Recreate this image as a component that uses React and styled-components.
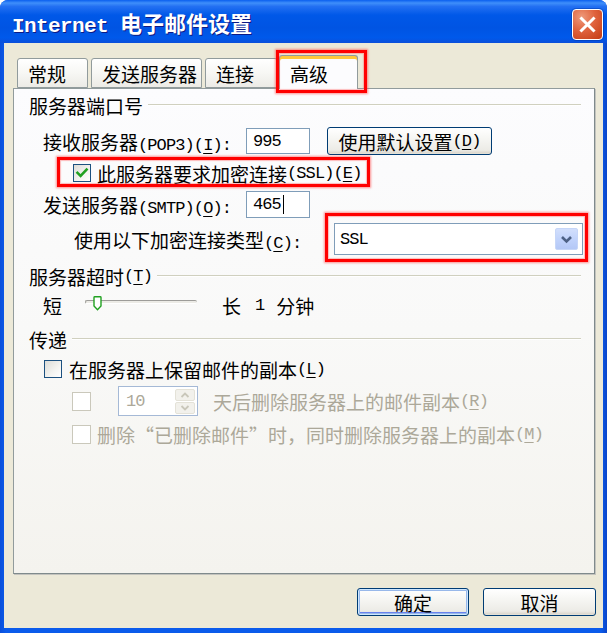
import React from 'react';
import styled, { createGlobalStyle } from 'styled-components';

const Global = createGlobalStyle`
  html, body { margin: 0; padding: 0; background: #ffffff; }
  body { font-family: "Noto Sans CJK SC", sans-serif; color: #000; }
  * { box-sizing: border-box; }
`;

const Window = styled.div`
  width: 607px;
  height: 633px;
  display: flex;
  flex-direction: column;
  background: linear-gradient(to right, #0A4FDB 0%, #0B5BEB 1%, #0B5BEB 99%, #0A45C8 100%);
  border-radius: 8px 8px 0 0;
  overflow: hidden;
`;

const TitleBar = styled.div`
  height: 43px;
  flex: none;
  display: flex;
  align-items: center;
  justify-content: space-between;
  padding: 6px 4px 0 12px;
  background: linear-gradient(to bottom, #0A5FEF 0%, #3F8FFA 7%, #2370F2 15%, #0058E8 35%, #0054E3 65%, #0059EB 88%, #0B4FDA 100%);
`;

const TitleText = styled.div`
  color: #fff;
  font-weight: bold;
  font-size: 22px;
  line-height: 28px;
  text-shadow: 1px 1px 0 #0C1A85;
  white-space: nowrap;
`;

const TitleLatin = styled.span`
  font-family: "Liberation Mono", monospace;
  font-size: 21px;
  letter-spacing: -0.6px;
  font-weight: bold;
  margin-right: 12px;
`;

const CloseButton = styled.div`
  width: 31px;
  height: 31px;
  border: 1px solid #ffffff;
  border-radius: 4px;
  background: radial-gradient(circle at 30% 25%, #EE9A7C 0%, #E0633E 45%, #C33A12 100%);
  display: flex;
  align-items: center;
  justify-content: center;
  box-shadow: 0 0 0 1px rgba(0, 40, 140, 0.35);
`;

const Body = styled.div`
  flex: 1;
  margin: 0 4px 5px 4px;
  background: #ECE9D8;
  display: flex;
  flex-direction: column;
  padding: 12px 8px 12px 9px;
`;

const TabStrip = styled.div`
  height: 33px;
  display: flex;
  align-items: flex-end;
  padding-left: 4px;
  position: relative;
  z-index: 2;
`;

const Tab = styled.div`
  position: relative;
  width: ${p => p.$w}px;
  height: ${p => (p.$active ? 34 : 30)}px;
  margin-left: ${p => p.$ml || 0}px;
  margin-bottom: ${p => (p.$active ? -1 : 0)}px;
  border: 1px solid #919B9C;
  border-bottom: ${p => (p.$active ? 'none' : '1px solid #919B9C')};
  border-radius: 3px 3px 0 0;
  background: ${p => (p.$active
    ? '#FCFCFE'
    : 'linear-gradient(to bottom, #FFFFFF 0%, #F7F7F4 50%, #ECEBE6 100%)')};
  box-shadow: ${p => (p.$active ? 'inset 0 3px 0 #FFC83C, inset 0 1px 0 #E68B2C' : 'none')};
  font-size: 19px;
  line-height: 1;
  display: flex;
  align-items: center;
  padding-left: 10px;
  padding-top: ${p => (p.$active ? 1 : 0)}px;
  white-space: nowrap;
`;

const Mark = styled.div`
  position: absolute;
  left: ${p => p.$l}px;
  top: ${p => p.$t}px;
  width: ${p => p.$w}px;
  height: ${p => p.$h}px;
  border: 3px solid #FF0000;
  box-shadow: 0 0 2px 1px rgba(255, 60, 60, 0.55), inset 0 0 1px 1px rgba(255, 90, 90, 0.4);
  pointer-events: none;
  z-index: 5;
`;

const Panel = styled.div`
  height: 486px;
  flex: none;
  border: 1px solid #919B9C;
  border-right-color: #7F8A8C;
  border-bottom-color: #7F8A8C;
  box-shadow: 1px 1px 0 #C3C3BE;
  background: linear-gradient(to bottom, #FCFCFE 0%, #F9F9F8 50%, #F4F3EE 100%);
  display: flex;
  flex-direction: column;
  padding: 4px 13px 0 0;
  font-size: 19px;
`;

const GroupHead = styled.div`
  margin-top: ${p => p.$mt || 0}px;
  height: 24px;
  display: flex;
  align-items: center;
  padding-left: 15px;
  white-space: nowrap;
`;

const Rule = styled.div`
  flex: 1;
  height: 2px;
  margin-left: 5px;
  border-top: 1px solid #D0D0BF;
  border-bottom: 1px solid #FFFFFF;
`;

const Row = styled.div`
  position: relative;
  margin-top: ${p => p.$mt || 0}px;
  height: ${p => p.$h}px;
  padding-left: ${p => p.$pl}px;
  display: flex;
  align-items: center;
  white-space: nowrap;
  color: ${p => (p.$disabled ? '#ACA899' : '#000')};
`;

const FieldLabel = styled.div`
  width: ${p => p.$w}px;
  flex: none;
`;

const Latin = styled.span`
  font-family: "Liberation Mono", monospace;
  font-size: 17px;
  letter-spacing: -0.9px;
`;

const Num = styled.span`
  font-family: "Liberation Mono", monospace;
  font-size: 17px;
  margin: 0 11px 0 14px;
`;

const Key = styled.span`
  text-decoration: underline;
  text-underline-offset: 3px;
`;

const TextBox = styled.div`
  width: ${p => p.$w}px;
  height: ${p => p.$h}px;
  flex: none;
  border: 1px solid #7F9DB9;
  background: #fff;
  display: flex;
  align-items: center;
  padding-left: 6px;
`;

const Caret = styled.span`
  display: inline-block;
  width: 1px;
  height: 19px;
  background: #000;
  margin-left: 2px;
`;

const PushButton = styled.div`
  width: ${p => p.$w}px;
  height: 28px;
  flex: none;
  margin-left: ${p => p.$ml || 0}px;
  border: 1px solid #003C74;
  border-radius: 3px;
  background: linear-gradient(to bottom, #FFFFFF 0%, #F6F6F3 40%, #ECEBE6 85%, #D6D0C5 100%);
  box-shadow: ${p => (p.$default
    ? 'inset 0 0 0 1px #CEE7FF, inset 0 0 0 2px #98B8EA, inset 0 -2px 0 1px #6982EE'
    : 'inset 0 -1px 0 #E3E0D6')};
  display: flex;
  align-items: center;
  justify-content: center;
  font-size: 19px;
  white-space: nowrap;
`;

const Box = styled.div`
  width: ${p => p.$s || 18}px;
  height: ${p => p.$s || 18}px;
  flex: none;
  margin-right: ${p => p.$gap}px;
  border: 1px solid ${p => (p.$disabled ? '#CAC8BB' : '#1C5180')};
  background: ${p => (p.$disabled ? '#FFFFFF' : 'linear-gradient(135deg, #DCDCD7 0%, #F4F4F1 60%, #FFFFFF 100%)')};
  display: flex;
  align-items: center;
  justify-content: center;
`;

const Select = styled.div`
  position: relative;
  width: 249px;
  height: 32px;
  flex: none;
  border: 1px solid #7F9DB9;
  background: #fff;
  display: flex;
  align-items: center;
  justify-content: space-between;
  padding: 0 4px 0 5px;
`;

const DropButton = styled.div`
  width: 23px;
  height: 22px;
  border-radius: 2px;
  background: linear-gradient(to bottom, #D2DFFC 0%, #C1D3FB 50%, #B4C8F6 100%);
  border: 1px solid #C6D6F8;
  display: flex;
  align-items: center;
  justify-content: center;
`;

const Track = styled.div`
  position: relative;
  width: 112px;
  height: 4px;
  flex: none;
  margin-left: ${p => p.$ml}px;
  margin-right: ${p => p.$mr}px;
  border-radius: 2px;
  border-top: 1px solid #9D9C99;
  border-left: 1px solid #9D9C99;
  border-bottom: 1px solid #FFFFFF;
  background: #ECEBE6;
  align-self: flex-start;
  margin-top: 7px;
`;

const Thumb = styled.svg`
  position: absolute;
  left: 7px;
  top: -5px;
`;

const Spinner = styled.div`
  width: 80px;
  height: 30px;
  flex: none;
  margin-right: 15px;
  border: 1px solid #A5B9D6;
  background: #fff;
  display: flex;
  align-items: center;
  justify-content: space-between;
  padding: 0 2px 0 7px;
  color: #ACA899;
`;

const SpinButtons = styled.div`
  display: flex;
  flex-direction: column;
  gap: 1px;
`;

const SpinPart = styled.div`
  width: 20px;
  height: 12px;
  border-radius: 2px;
  background: #F2F1EC;
  border: 1px solid #E4E2D8;
  display: flex;
  align-items: center;
  justify-content: center;
`;

const ButtonBar = styled.div`
  margin-top: 14px;
  margin-right: -1px;
  display: flex;
  justify-content: flex-end;
  gap: 14px;
`;

const Mn = ({ k }) => (
  <Latin>(<Key>{k}</Key>)</Latin>
);

const Check = () => (
  <svg width="14" height="14" viewBox="0 0 14 14">
    <path d="M2.5 6.8 L5.6 9.9 L11.6 3.6" fill="none" stroke="#21A121" strokeWidth="2.6" strokeLinecap="square" />
  </svg>
);

export default function App() {
  return (
    <>
      <Global />
      <Window>
        <TitleBar>
          <TitleText>
            <TitleLatin>Internet</TitleLatin>电子邮件设置
          </TitleText>
          <CloseButton>
            <svg width="17" height="17" viewBox="0 0 17 17">
              <path d="M2.5 2.5 L14.5 14.5 M14.5 2.5 L2.5 14.5" stroke="#fff" strokeWidth="3" strokeLinecap="square" />
            </svg>
          </CloseButton>
        </TitleBar>
        <Body>
          <TabStrip>
            <Tab $w={71}>常规</Tab>
            <Tab $w={111} $ml={3}>发送服务器</Tab>
            <Tab $w={73} $ml={3}>连接</Tab>
            <Tab $w={79} $ml={1} $active>
              高级
              <Mark $l={-4} $t={-6} $w={91} $h={43} />
            </Tab>
          </TabStrip>
          <Panel>
            <GroupHead>
              服务器端口号<Rule />
            </GroupHead>
            <Row $mt={10} $h={28} $pl={29}>
              <FieldLabel $w={203}>
                接收服务器<Latin>(POP3)(<Key>I</Key>):</Latin>
              </FieldLabel>
              <TextBox $w={64} $h={26}><Latin>995</Latin></TextBox>
              <PushButton $w={165} $ml={17}>使用默认设置<Mn k="D" /></PushButton>
            </Row>
            <Row $mt={5} $h={26} $pl={59}>
              <Box $gap={6}><Check /></Box>
              此服务器要求加密连接<Latin>(SSL)</Latin><Mn k="E" />
              <Mark $l={43} $t={-3} $w={313} $h={30} />
            </Row>
            <Row $mt={5} $h={27} $pl={29}>
              <FieldLabel $w={203}>
                发送服务器<Latin>(SMTP)(<Key>O</Key>):</Latin>
              </FieldLabel>
              <TextBox $w={64} $h={27}><Latin>465</Latin><Caret /></TextBox>
            </Row>
            <Row $mt={5} $h={32} $pl={60}>
              <FieldLabel $w={260}>
                使用以下加密连接类型<Mn k="C" /><Latin>:</Latin>
              </FieldLabel>
              <Select>
                <Latin>SSL</Latin>
                <DropButton>
                  <svg width="13" height="9" viewBox="0 0 13 9">
                    <path d="M2 2 L6.5 6.5 L11 2" fill="none" stroke="#4D6185" strokeWidth="2.6" />
                  </svg>
                </DropButton>
                <Mark $l={-10} $t={-11} $w={263} $h={49} />
              </Select>
            </Row>
            <GroupHead $mt={9}>
              服务器超时<Mn k="T" /><Rule />
            </GroupHead>
            <Row $mt={5} $h={24} $pl={29}>
              短
              <Track $ml={23} $mr={25}>
                <Thumb width="9" height="15" viewBox="0 0 9 15">
                  <path d="M1 1.5 Q1 0.8 1.8 0.8 L7.2 0.8 Q8 0.8 8 1.5 L8 10 L4.5 13.8 L1 10 Z" fill="#ffffff" stroke="#21A121" strokeWidth="1.4" />
                </Thumb>
              </Track>
              长<Num>1</Num>分钟
            </Row>
            <GroupHead $mt={10}>
              传递<Rule />
            </GroupHead>
            <Row $mt={6} $h={24} $pl={30}>
              <Box $gap={7} />
              在服务器上保留邮件的副本<Mn k="L" />
            </Row>
            <Row $mt={5} $h={30} $pl={58} $disabled>
              <Box $gap={27} $s={19} $disabled />
              <Spinner>
                <Latin>10</Latin>
                <SpinButtons>
                  <SpinPart>
                    <svg width="10" height="6" viewBox="0 0 10 6">
                      <path d="M1.5 5 L5 1.5 L8.5 5" fill="none" stroke="#C9C7BA" strokeWidth="1.8" />
                    </svg>
                  </SpinPart>
                  <SpinPart>
                    <svg width="10" height="6" viewBox="0 0 10 6">
                      <path d="M1.5 1 L5 4.5 L8.5 1" fill="none" stroke="#C9C7BA" strokeWidth="1.8" />
                    </svg>
                  </SpinPart>
                </SpinButtons>
              </Spinner>
              天后删除服务器上的邮件副本<Mn k="R" />
            </Row>
            <Row $mt={6} $h={24} $pl={58} $disabled>
              <Box $gap={6} $s={19} $disabled />
              删除“已删除邮件”时，同时删除服务器上的副本<Mn k="M" />
            </Row>
          </Panel>
          <ButtonBar>
            <PushButton $w={112} $default>确定</PushButton>
            <PushButton $w={113}>取消</PushButton>
          </ButtonBar>
        </Body>
      </Window>
    </>
  );
}
